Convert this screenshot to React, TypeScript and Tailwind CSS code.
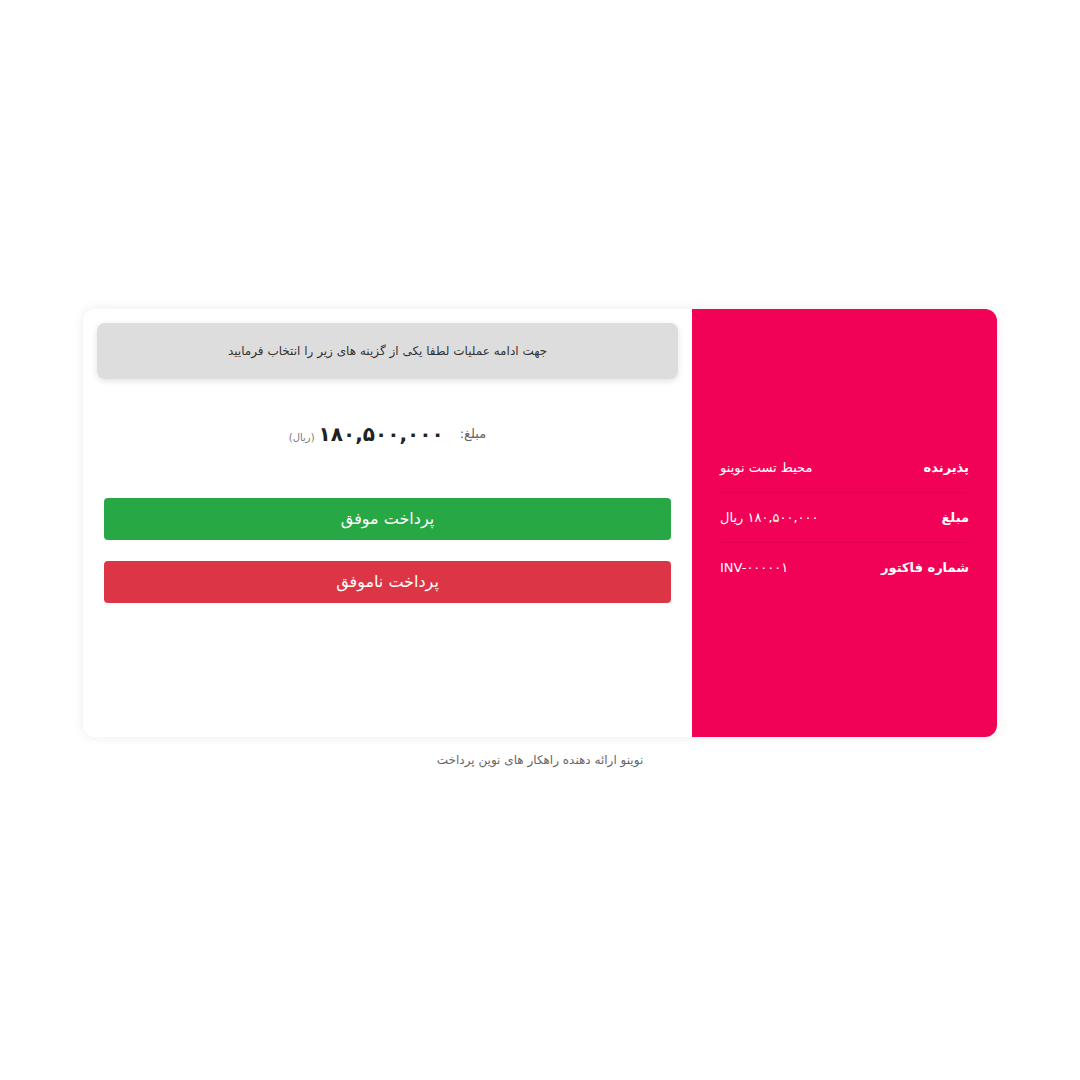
const rows = [
  { label: 'پذیرنده', value: 'محیط تست نوینو' },
  { label: 'مبلغ', value: '۱۸۰,۵۰۰,۰۰۰ ریال' },
  { label: 'شماره فاکتور', value: 'INV-۰۰۰۰۰۱' },
]

export default function App() {
  return (
    <div
      dir="rtl"
      className="flex h-[1080px] w-[1080px] flex-col items-center bg-white pt-[309px]"
      style={{ fontFamily: '"DejaVu Sans", "Noto Sans", sans-serif' }}
    >
      <div className="flex h-[428px] w-[914px] overflow-hidden rounded-xl bg-white shadow-[0_0_12px_rgba(0,0,0,0.08)]">
        {/* info panel */}
        <div className="flex w-[305px] flex-col bg-[#f20256] px-7 pt-[134px] text-white">
          {rows.map((row, i) => (
            <div
              key={row.label}
              className={
                'flex h-[50px] items-center justify-between ' +
                (i < rows.length - 1 ? 'border-b border-[rgba(0,0,0,0.06)]' : '')
              }
            >
              <span className="text-[13px] font-bold">{row.label}</span>
              <span className="text-[13px]">{row.value}</span>
            </div>
          ))}
        </div>

        {/* actions */}
        <div className="flex flex-1 flex-col px-[14px] pt-[14px]">
          <div className="flex h-[56px] items-center justify-center rounded-lg bg-[#dddddd] text-[12px] text-[#333] shadow-[0_2px_6px_rgba(0,0,0,0.12)]">
            جهت ادامه عملیات لطفا یکی از گزینه های زیر را انتخاب فرمایید
          </div>

          <div className="mt-[40px] flex items-center justify-center gap-4">
            <span className="text-[13px] text-[#666]">مبلغ:</span>
            <span className="flex items-baseline gap-1">
              <span className="text-[20px] font-bold text-[#222]">۱۸۰,۵۰۰,۰۰۰</span>
              <span className="text-[10px] text-[#777]">(ریال)</span>
            </span>
          </div>

          <div className="mt-[49px] flex flex-col gap-[21px] px-[7px]">
            <button className="h-[42px] rounded bg-[#28a745] text-[16px] text-white">
              پرداخت موفق
            </button>
            <button className="h-[42px] rounded bg-[#dc3545] text-[16px] text-white">
              پرداخت ناموفق
            </button>
          </div>
        </div>
      </div>

      <p className="mt-[14px] text-[12px] text-[#666]">نوینو ارائه دهنده راهکار های نوین پرداخت</p>
    </div>
  )
}
